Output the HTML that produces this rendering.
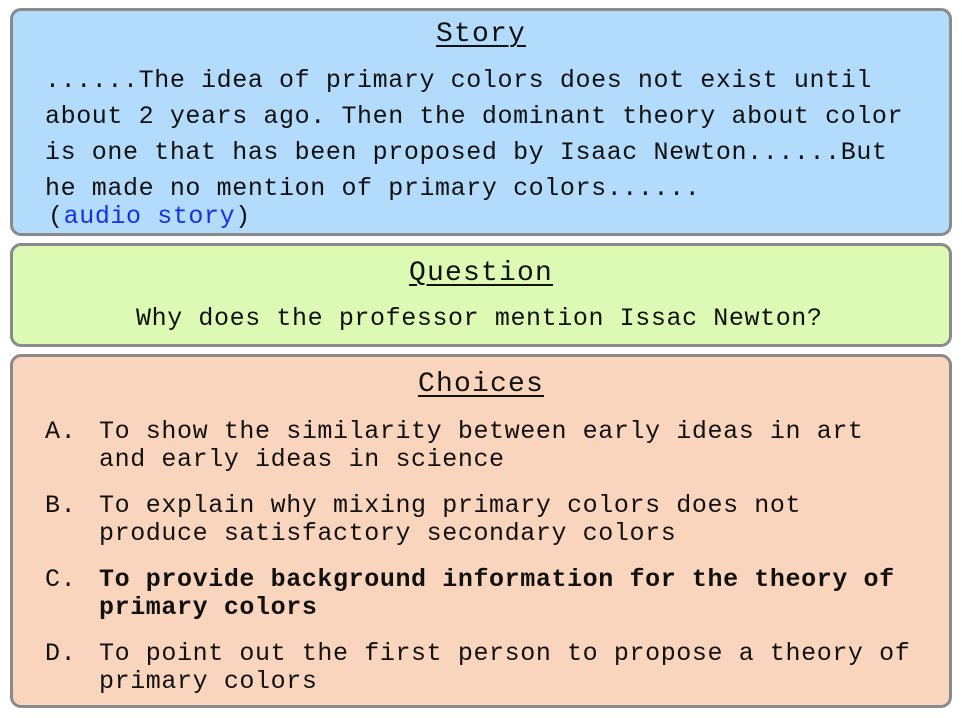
<!DOCTYPE html>
<html><head><style>
body{margin:0;width:962px;height:718px;background:#fff;position:relative;overflow:hidden;font-family:"Liberation Mono",monospace;color:#111}
.box{position:absolute;left:10px;width:936px;border:3px solid #8a8a8a;border-radius:11px}
.t{position:absolute;white-space:pre;font-size:25px;letter-spacing:0.6px;line-height:28px}
.h{position:absolute;left:0;width:100%;text-align:center;font-size:28px;letter-spacing:1.2px;text-decoration:underline;text-underline-offset:4px;text-decoration-thickness:2px;line-height:30px}
a{color:#1a2ee8;text-decoration:none}
b{font-weight:bold}
</style></head><body>
<div class="box" style="top:8px;height:222px;background:#b3dbfb"></div>
<div class="box" style="top:243px;height:98px;background:#dcfab3"></div>
<div class="box" style="top:354px;height:348px;background:#fad5bd"></div>

<div class="h" style="top:20px">Story</div>
<div class="t" style="left:45px;top:67px">......The idea of primary colors does not exist until</div>
<div class="t" style="left:45px;top:103px">about 2 years ago. Then the dominant theory about color</div>
<div class="t" style="left:45px;top:139px">is one that has been proposed by Isaac Newton......But</div>
<div class="t" style="left:45px;top:175px">he made no mention of primary colors......</div>
<div class="t" style="left:48px;top:203px">(<a>audio story</a>)</div>

<div class="h" style="top:259px">Question</div>
<div class="t" style="left:136px;top:305px">Why does the professor mention Issac Newton?</div>

<div class="h" style="top:370px">Choices</div>
<div class="t" style="left:45px;top:418px">A.</div>
<div class="t" style="left:99px;top:418px">To show the similarity between early ideas in art</div>
<div class="t" style="left:99px;top:446px">and early ideas in science</div>
<div class="t" style="left:45px;top:492px">B.</div>
<div class="t" style="left:99px;top:492px">To explain why mixing primary colors does not</div>
<div class="t" style="left:99px;top:520px">produce satisfactory secondary colors</div>
<div class="t" style="left:45px;top:566px">C.</div>
<div class="t" style="left:99px;top:566px"><b>To provide background information for the theory of</b></div>
<div class="t" style="left:99px;top:594px"><b>primary colors</b></div>
<div class="t" style="left:45px;top:640px">D.</div>
<div class="t" style="left:99px;top:640px">To point out the first person to propose a theory of</div>
<div class="t" style="left:99px;top:668px">primary colors</div>
</body></html>
